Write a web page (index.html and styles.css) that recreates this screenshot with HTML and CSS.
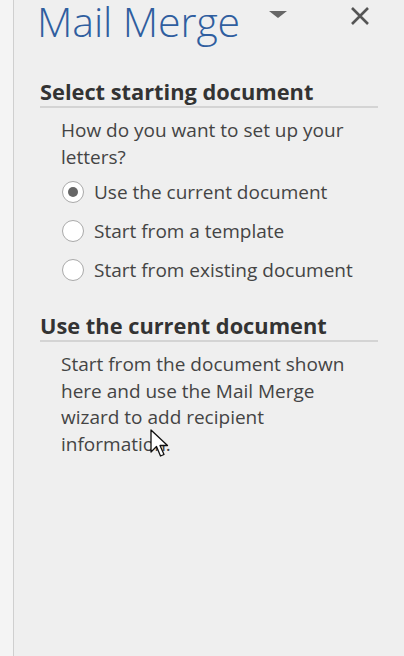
FILE: index.html
```html
<!DOCTYPE html>
<html lang="en">
<head>
    <meta charset="UTF-8">
    <title>Mail Merge</title>
    <link rel="stylesheet" href="styles.css">
</head>
<body>

<div class="window">
    <!-- Left edge of the document area -->
    <div class="edge"></div>

    <!-- Mail Merge task pane -->
    <div class="pane">
        <div class="pane-header">
            <h1>Mail Merge</h1>
            <div class="pane-buttons">
                <svg class="menu-arrow" width="18" height="8" viewBox="0 0 18 8"><polygon points="0,0 18,0 9,7" fill="#666"/></svg>
                <svg class="close" width="20" height="20" viewBox="0 0 20 20"><path d="M2 2 L18 18 M18 2 L2 18" stroke="#555" stroke-width="2.6"/></svg>
            </div>
        </div>

        <section class="step">
            <h2>Select starting document</h2>
            <p class="step-text">How do you want to set up your letters?</p>
            <label class="option"><span class="radio checked"></span>Use the current document</label>
            <label class="option"><span class="radio"></span>Start from a template</label>
            <label class="option"><span class="radio"></span>Start from existing document</label>
        </section>

        <section class="step">
            <h2>Use the current document</h2>
            <p class="step-text">Start from the document shown here and use the Mail Merge wizard to add recipient information.</p>
        </section>

        <!-- mouse pointer -->
        <svg class="pointer" width="20" height="30" viewBox="0 0 20 30">
            <path d="M1 1 L1 23 L6.5 17.5 L10.5 27 L14 25.5 L10 16.5 L17.5 16.5 Z" fill="#fff" stroke="#111" stroke-width="1.3" stroke-linejoin="round"/>
        </svg>
    </div>
</div>

</body>
</html>
```

FILE: styles.css
```css
/* Global */
body {
    margin: 0;
    padding: 0;
    font-family: 'Open Sans', 'Noto Sans', sans-serif;
    background-color: #efefef;
    color: #444;
}

.window {
    display: flex;
    height: 656px;
}

.edge {
    width: 13px;
    background-color: #f4f4f4;
    border-right: 1px solid #cfcfcf;
}

/* Task pane */
.pane {
    position: relative;
    flex: 1;
    padding: 0 26px 0 26px;
    background-color: #efefef;
}

.pane-header {
    display: flex;
    justify-content: space-between;
    align-items: flex-start;
    height: 64px;
}

.pane-header h1 {
    margin: 0 0 0 -3px;
    font-size: 41px;
    line-height: 42px;
    font-weight: 300;
    color: #2f5e9f;
    letter-spacing: -0.1px;
}

.pane-buttons {
    display: flex;
    align-items: flex-start;
    gap: 63px;
    margin-right: 8px;
}

.menu-arrow {
    margin-top: 11px;
}

.close {
    margin-top: 6px;
}

/* Steps */
.step h2 {
    margin: 14px 0 0 0;
    padding-bottom: 0;
    font-size: 21.8px;
    font-weight: 700;
    color: #333;
    border-bottom: 2px solid #d4d4d4;
    line-height: 28px;
}

.step + .step h2 {
    margin-top: 23px;
}

.step-text {
    margin: 9px 18px 0 21px;
    font-size: 19px;
    line-height: 26.5px;
    color: #444;
}

.option {
    display: flex;
    align-items: center;
    height: 39px;
    margin-left: 22px;
    font-size: 19px;
    color: #444;
}

.option:first-of-type {
    margin-top: 2px;
}

.radio {
    box-sizing: border-box;
    width: 22px;
    height: 22px;
    margin-right: 10px;
    border: 1px solid #a9a9a9;
    border-radius: 50%;
    background: #fff;
    position: relative;
}

.radio.checked::after {
    content: "";
    position: absolute;
    left: 5px;
    top: 5px;
    width: 10px;
    height: 10px;
    border-radius: 50%;
    background: #666;
}

.pointer {
    position: absolute;
    left: 136px;
    top: 429px;
}
```
